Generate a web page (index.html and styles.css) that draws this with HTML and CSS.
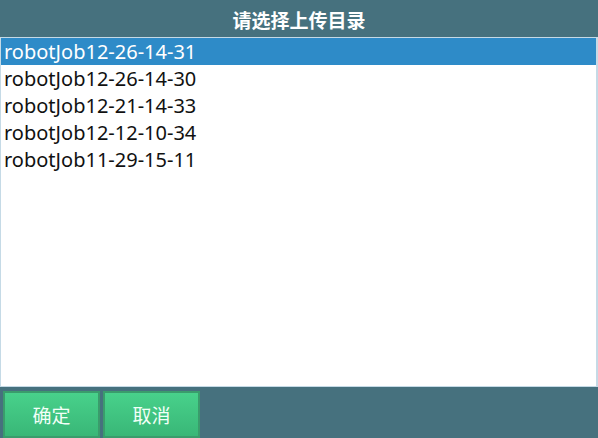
FILE: index.html
```html
<!DOCTYPE html>
<html lang="zh">
<head>
<meta charset="utf-8">
<link rel="stylesheet" href="styles.css">
</head>
<body>
<div class="dialog">
  <div class="header">请选择上传目录</div>
  <div class="list">
    <div class="item selected">robotJob12-26-14-31</div>
    <div class="item">robotJob12-26-14-30</div>
    <div class="item">robotJob12-21-14-33</div>
    <div class="item">robotJob12-12-10-34</div>
    <div class="item">robotJob11-29-15-11</div>
  </div>
  <div class="footer">
    <button class="btn">确定</button>
    <button class="btn">取消</button>
  </div>
</div>
</body>
</html>
```
FILE: styles.css
```css
html, body {
  margin: 0;
  padding: 0;
  width: 598px;
  height: 438px;
  overflow: hidden;
  background: #46717e;
  font-family: "Noto Sans", "Noto Sans CJK SC", sans-serif;
}
.dialog {
  display: flex;
  flex-direction: column;
  width: 598px;
  height: 438px;
}
.header {
  height: 37px;
  line-height: 40px;
  text-align: center;
  color: #ffffff;
  font-weight: bold;
  font-size: 19px;
  font-family: "Noto Sans CJK SC", sans-serif;
  background: #46717e;
}
.list {
  height: 348px;
  background: #ffffff;
  border: 1px solid #c5dae6;
  border-right-width: 2px;
  box-sizing: content-box;
  width: 595px;
}
.item {
  height: 27px;
  line-height: 27px;
  padding-left: 3px;
  font-size: 20px;
  color: #111111;
}
.item.selected {
  background: #2e8bc8;
  color: #ffffff;
}
.footer {
  flex: 1;
  display: flex;
  gap: 3px;
  padding: 4px 0 0 3px;
}
.btn {
  width: 97px;
  height: 47px;
  border: 2px solid #3a9c6c;
  background: linear-gradient(#48d18b, #39b777);
  color: #f2fff7;
  font-size: 19px;
  font-family: "Noto Sans CJK SC", sans-serif;
  padding: 0;
  margin: 0;
  box-sizing: border-box;
}
```
